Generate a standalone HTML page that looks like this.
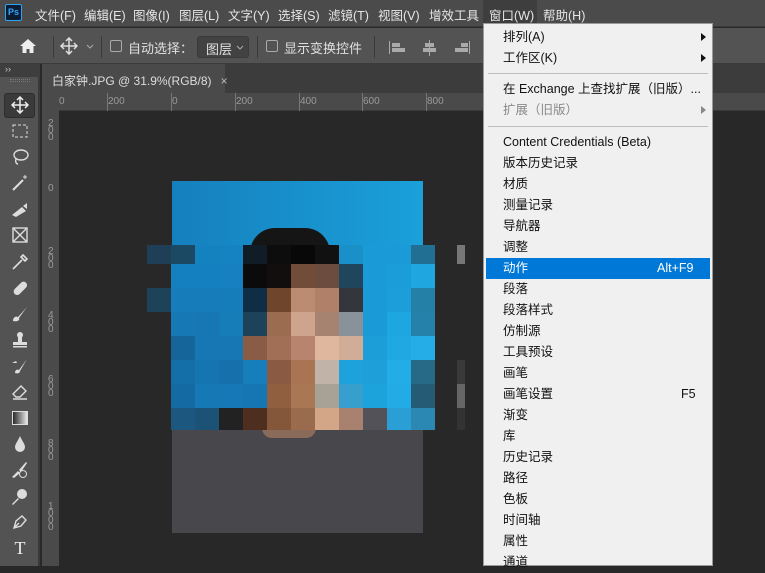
<!DOCTYPE html>
<html><head><meta charset="utf-8"><style>
*{margin:0;padding:0;box-sizing:border-box}
body{width:765px;height:566px;overflow:hidden;background:#282828;font-family:"Liberation Sans","Noto Sans CJK SC",sans-serif;position:relative;color:#ddd}
.abs{position:absolute}
#menubar{left:0;top:0;width:765px;height:27px;background:#4b4b4b;border-bottom:1px solid #3a3a3a;font-size:12.5px;color:#e6e6e6}
#menubar span{position:absolute;top:5px}
#opts{left:0;top:28px;width:765px;height:36px;background:#535353;border-bottom:1px solid #3a3a3a;font-size:13px;color:#e0e0e0}
#tabbar{left:42px;top:64px;width:723px;height:29px;background:#3c3c3c}
#tab{left:42px;top:64px;width:183px;height:29px;background:#4a4a4a;font-size:12px;color:#ddd;padding:8px 0 0 10px;white-space:nowrap}
#lp{left:0;top:64px;width:40px;height:502px;background:#535353;border-right:2px solid #3a3a3a}
#rtop{left:42px;top:93px;width:723px;height:18px;background:#4a4a4a;border-bottom:1px solid #3a3a3a}
#rleft{left:42px;top:93px;width:17px;height:473px;background:#4a4a4a}
.rt{position:absolute;font-size:10px;color:#9a9a9a;font-family:"Liberation Sans",sans-serif}
#menu{left:483px;top:23px;width:230px;height:543px;background:#f0f0f0;border:1px solid #9a9a9a;font-size:12.5px;color:#111}
.mi{position:absolute;left:19px;height:21px;line-height:21px}
.sep{position:absolute;left:4px;right:4px;height:1px;background:#bdbdbd}
.arr{position:absolute;right:6px;width:0;height:0;border-left:5px solid #111;border-top:4px solid transparent;border-bottom:4px solid transparent}
.tool{position:absolute;left:10px;width:20px;height:20px;color:#ddd;font-size:15px;text-align:center}
</style></head><body>
<div id="menubar" class="abs">
<div class="abs" style="left:5px;top:4px;width:17px;height:17px;background:#0b1c33;border:1px solid #2fa3f0;border-radius:2px;color:#31a8ff;font-size:9px;font-weight:bold;text-align:center;line-height:15px">Ps</div>
<span style="left:35px">文件(F)</span><span style="left:84px">编辑(E)</span><span style="left:133px">图像(I)</span><span style="left:179px">图层(L)</span><span style="left:228px">文字(Y)</span><span style="left:278px">选择(S)</span><span style="left:328px">滤镜(T)</span><span style="left:378px">视图(V)</span><span style="left:429px">增效工具</span>
<div class="abs" style="left:483px;top:0;width:54px;height:24px;background:#3e3e3e"></div>
<span style="left:489px">窗口(W)</span><span style="left:543px">帮助(H)</span>
</div>
<div id="opts" class="abs">
<svg class="abs" style="left:19px;top:10px" width="18" height="16"><path d="M9 1L1 8h2.5v7h4v-4h3v4h4V8H17z" fill="#eee"/></svg>
<div class="abs" style="left:53px;top:8px;width:1px;height:22px;background:#3a3a3a"></div>
<svg class="abs" style="left:60px;top:9px" width="18" height="18" stroke="#ddd" fill="none" stroke-width="1.5"><path d="M9 1v16M1 9h16M6 4l3-3 3 3M6 14l3 3 3-3M4 6l-3 3 3 3M14 6l3 3-3 3"/></svg>
<svg class="abs" style="left:86px;top:16px" width="8" height="6" stroke="#aaa" fill="none"><path d="M1 1l3 3 3-3"/></svg>
<div class="abs" style="left:101px;top:8px;width:1px;height:22px;background:#3a3a3a"></div>
<div class="abs" style="left:110px;top:12px;width:12px;height:12px;border:1px solid #aaa;border-radius:2px"></div>
<span class="abs" style="left:128px;top:10px">自动选择：</span>
<div class="abs" style="left:197px;top:8px;width:52px;height:22px;background:#424242;border:1px solid #3a3a3a;border-radius:3px"><span class="abs" style="left:8px;top:2px">图层</span><svg class="abs" style="left:38px;top:8px" width="8" height="6" stroke="#aaa" fill="none"><path d="M1 1l3 3 3-3"/></svg></div>
<div class="abs" style="left:257px;top:8px;width:1px;height:22px;background:#3a3a3a"></div>
<div class="abs" style="left:266px;top:12px;width:12px;height:12px;border:1px solid #aaa;border-radius:2px"></div>
<span class="abs" style="left:284px;top:10px">显示变换控件</span>
<div class="abs" style="left:374px;top:8px;width:1px;height:22px;background:#3a3a3a"></div>
<svg class="abs" style="left:389px;top:12px" width="100" height="16" fill="#aaa"><rect x="0" y="1" width="1" height="13"/><rect x="3" y="3" width="8" height="4"/><rect x="3" y="8" width="13" height="4"/><rect x="40" y="0" width="1" height="16"/><rect x="36" y="3" width="9" height="4"/><rect x="34" y="8" width="13" height="4"/><rect x="80" y="1" width="1" height="13"/><rect x="72" y="3" width="7" height="4"/><rect x="66" y="8" width="13" height="4"/></svg>
</div>
<div id="lp" class="abs">
<div class="abs" style="left:0;top:0;width:40px;height:13px;background:#3e3e3e;font-size:9px;color:#ccc;padding-left:5px">››</div>
<div class="abs" style="left:10px;top:15px;width:20px;height:3px;border-top:1px dotted #777;border-bottom:1px dotted #777"></div>
<div class="abs" style="left:4px;top:29px;width:31px;height:25px;background:#3a3a3a;border:1px solid #2e2e2e;border-radius:3px"></div>
</div>
<div class="tool" style="top:96px"><svg width="18" height="18" stroke="#eee" fill="none" stroke-width="1.5"><path d="M9 1v16M1 9h16M6 4l3-3 3 3M6 14l3 3 3-3M4 6l-3 3 3 3M14 6l3 3-3 3"/></svg></div>
<div class="tool" style="top:123px"><svg width="18" height="16" stroke="#ddd" fill="none" stroke-dasharray="3 2"><rect x="2" y="2" width="14" height="12"/></svg></div>
<div class="tool" style="top:148px"><svg width="18" height="18" stroke="#ddd" fill="none" stroke-width="1.4"><ellipse cx="10" cy="7" rx="7" ry="5"/><path d="M5 11c-1 2 0 5 2 5"/></svg></div>
<div class="tool" style="top:174px"><svg width="18" height="18" stroke="#ddd" fill="#ddd" stroke-width="2"><path d="M2 16L12 6"/><path d="M14 1v4M12 3h4" stroke-width="1"/></svg></div>
<div class="tool" style="top:200px"><svg width="18" height="18" fill="#ddd"><path d="M1 15l10-8 4 4-10 6z M12 6l4-3 0 6z"/></svg></div>
<div class="tool" style="top:226px"><svg width="18" height="18" stroke="#ddd" fill="none" stroke-width="1.4"><rect x="2" y="2" width="14" height="14"/><path d="M2 2l14 14M16 2L2 16"/></svg></div>
<div class="tool" style="top:253px"><svg width="18" height="18" stroke="#ddd" fill="none" stroke-width="1.6"><path d="M2 16l9-9M10 4l4 4M12 2l4 4-2 2-4-4z"/></svg></div>
<div class="tool" style="top:279px"><svg width="18" height="18" fill="#ddd"><rect x="1" y="6" width="16" height="7" rx="3.5" transform="rotate(-45 9 9)"/></svg></div>
<div class="tool" style="top:305px"><svg width="18" height="18" fill="#ddd"><path d="M2 16c0-4 3-5 5-4l9-10-8 11c1 2-1 4-6 3z"/></svg></div>
<div class="tool" style="top:331px"><svg width="18" height="18" fill="#ddd"><circle cx="9" cy="4" r="3"/><rect x="7" y="6" width="4" height="5"/><rect x="2" y="11" width="14" height="3"/><rect x="2" y="15" width="14" height="1.5"/></svg></div>
<div class="tool" style="top:357px"><svg width="18" height="18" fill="#ddd"><path d="M4 16c0-3 2-4 4-3l8-11-7 12c0 2-2 3-5 2z M1 6l4-2 1 2z"/></svg></div>
<div class="tool" style="top:383px"><svg width="18" height="18" stroke="#ddd" fill="none" stroke-width="1.4"><path d="M2 11l8-8 5 5-6 6H5zM2 16h14"/></svg></div>
<div class="tool" style="top:409px"><svg width="18" height="18"><defs><linearGradient id="g"><stop offset="0" stop-color="#222"/><stop offset="1" stop-color="#eee"/></linearGradient></defs><rect x="1.5" y="2.5" width="15" height="13" fill="url(#g)" stroke="#ddd"/></svg></div>
<div class="tool" style="top:435px"><svg width="18" height="18" fill="#ddd"><path d="M9 1C7 6 4 9 4 12a5 5 0 0 0 10 0c0-3-3-6-5-11z"/></svg></div>
<div class="tool" style="top:461px"><svg width="18" height="18" fill="#ddd"><path d="M1 16l6-6 2 2-6 5zM8 9l7-8 1 1-6 9z"/><circle cx="12" cy="13" r="3.5" fill="none" stroke="#ddd"/></svg></div>
<div class="tool" style="top:487px"><svg width="18" height="18" fill="#ddd"><circle cx="11" cy="7" r="5"/><path d="M1 17l6-6 1 1-6 6z"/></svg></div>
<div class="tool" style="top:513px"><svg width="18" height="18" stroke="#ddd" fill="none" stroke-width="1.4"><path d="M3 15l2-7 6-5 4 4-5 6zM3 15l5-5"/></svg></div>
<div class="tool" style="top:538px;font-size:18px;font-family:'Liberation Serif',serif;color:#eee">T</div>

<div id="tabbar" class="abs"></div>
<div id="tab" class="abs">白家钟.JPG @ 31.9%(RGB/8)<span style="margin-left:9px;color:#bbb">×</span></div>
<div id="rtop" class="abs">
<span class="rt" style="left:17px;top:3px">0</span>
<span class="rt" style="left:66px;top:3px">200</span><span class="rt" style="left:130px;top:3px">0</span>
<span class="rt" style="left:194px;top:3px">200</span><span class="rt" style="left:258px;top:3px">400</span>
<span class="rt" style="left:321px;top:3px">600</span><span class="rt" style="left:385px;top:3px">800</span>
<div class="abs" style="left:65px;top:0;width:1px;height:18px;background:#777"></div>
<div class="abs" style="left:129px;top:0;width:1px;height:18px;background:#777"></div>
<div class="abs" style="left:193px;top:0;width:1px;height:18px;background:#777"></div>
<div class="abs" style="left:257px;top:0;width:1px;height:18px;background:#777"></div>
<div class="abs" style="left:320px;top:0;width:1px;height:18px;background:#777"></div>
<div class="abs" style="left:384px;top:0;width:1px;height:18px;background:#777"></div>
</div>
<div id="rleft" class="abs" style="font-size:10px;color:#999;line-height:7px">
<span class="rt" style="left:6px;top:27px;line-height:7px">2<br>0<br>0</span>
<span class="rt" style="left:6px;top:92px">0</span>
<span class="rt" style="left:6px;top:155px;line-height:7px">2<br>0<br>0</span>
<span class="rt" style="left:6px;top:219px;line-height:7px">4<br>0<br>0</span>
<span class="rt" style="left:6px;top:283px;line-height:7px">6<br>0<br>0</span>
<span class="rt" style="left:6px;top:347px;line-height:7px">8<br>0<br>0</span>
<span class="rt" style="left:6px;top:410px;line-height:7px">1<br>0<br>0<br>0</span>
</div>

<!-- image -->
<div class="abs" style="left:172px;top:181px;width:251px;height:352px;background:linear-gradient(90deg,#1580bd,#1ba0da)"></div>
<div class="abs" style="left:172px;top:430px;width:251px;height:103px;background:#48474c"></div>
<div class="abs" style="left:262px;top:428px;width:54px;height:10px;background:#8a6a58;border-radius:0 0 27px 27px"></div>
<div class="abs" style="left:250px;top:228px;width:80px;height:25px;background:#151515;border-radius:40px 40px 0 0"></div>
<svg class="abs" style="left:147px;top:245px" width="320" height="185" shape-rendering="crispEdges">
<g id="m"></g>
</svg>
<script>
var cols=[["#1e3f55","#1b4862","#1582c0","#1583c2","#101c26","#0d0d0d","#080808","#111111","#1a90c8","#1a9ad6","#1a9ad6","#226f94"],
["","#1580bf","#1580bf","#1680c0","#0c0b0c","#130e0e","#714c38","#6b4c3e","#1f465d","#1a9ad6","#1b9dd8","#1fa6e0"],
["#1e4358","#167cba","#167cba","#167dbb","#0f2d44","#6f452c","#bb8c72","#b08068","#33373c","#1a9ad6","#1c9fd9","#2580a8"],
["","#1679b6","#1677b4","#167db9","#1c4359","#9c6c50","#cfa48c","#a68270","#89929a","#1a9ad6","#1ea6e0","#2581aa"],
["","#16659a","#1677b4","#1677b4","#8a5c45","#a06f55","#b8846d","#deb79e","#d1ad98","#1c9fd9","#20a8e2","#24ade6"],
["","#146ea8","#1575b1","#1570ac","#157ebb","#8a5b42","#a87452","#c1b3a8","#1ea2dc","#1e9fd9","#23ade6","#266a88"],
["","#146aa3","#1579b5","#1678b6","#1676b3","#8f5f40","#a97754","#a8a196","#379fce","#1da3dc","#22abe5","#265b75"],
["","#1c5780","#1b5275","#222222","#4e2e1e","#85573a","#9a6b4c","#d2a686","#a8826f","#535258","#2a9fd6","#2b88b3"]];
var ys=[0,19,43,67,91,115,139,163,185];var ex=["#777","","","","","#3a3a3a","#666","#333"];
var s="";for(var r=0;r<8;r++){for(var c=0;c<12;c++){if(cols[r][c])s+='<rect x="'+(c*24)+'" y="'+ys[r]+'" width="24" height="'+(ys[r+1]-ys[r])+'" fill="'+cols[r][c]+'"/>';}
if(ex[r])s+='<rect x="310" y="'+ys[r]+'" width="8" height="'+(ys[r+1]-ys[r])+'" fill="'+ex[r]+'"/>';}
document.getElementById("m").innerHTML=s;
</script>

<div id="menu" class="abs">
<div class="mi" style="top:3px">排列(A)</div><div class="arr" style="top:9px"></div>
<div class="mi" style="top:24px">工作区(K)</div><div class="arr" style="top:30px"></div>
<div class="sep" style="top:49px"></div>
<div class="mi" style="top:55px">在 Exchange 上查找扩展（旧版）...</div>
<div class="mi" style="top:76px;color:#8a8a8a">扩展（旧版）</div><div class="arr" style="top:82px;border-left-color:#888"></div>
<div class="sep" style="top:102px"></div>
<div class="mi" style="top:108px">Content Credentials (Beta)</div>
<div class="mi" style="top:129px">版本历史记录</div>
<div class="mi" style="top:150px">材质</div>
<div class="mi" style="top:171px">测量记录</div>
<div class="mi" style="top:192px">导航器</div>
<div class="mi" style="top:213px">调整</div>
<div class="abs" style="left:2px;top:234px;width:224px;height:21px;background:#0078d7"></div>
<div class="mi" style="top:234px;color:#fff">动作</div><div class="abs" style="left:173px;top:234px;line-height:21px;color:#fff">Alt+F9</div>
<div class="mi" style="top:255px">段落</div>
<div class="mi" style="top:276px">段落样式</div>
<div class="mi" style="top:297px">仿制源</div>
<div class="mi" style="top:318px">工具预设</div>
<div class="mi" style="top:339px">画笔</div>
<div class="mi" style="top:360px">画笔设置</div><div class="abs" style="left:197px;top:360px;line-height:21px">F5</div>
<div class="mi" style="top:381px">渐变</div>
<div class="mi" style="top:402px">库</div>
<div class="mi" style="top:423px">历史记录</div>
<div class="mi" style="top:444px">路径</div>
<div class="mi" style="top:465px">色板</div>
<div class="mi" style="top:486px">时间轴</div>
<div class="mi" style="top:507px">属性</div>
<div class="mi" style="top:528px">通道</div>
</div>
</body></html>
